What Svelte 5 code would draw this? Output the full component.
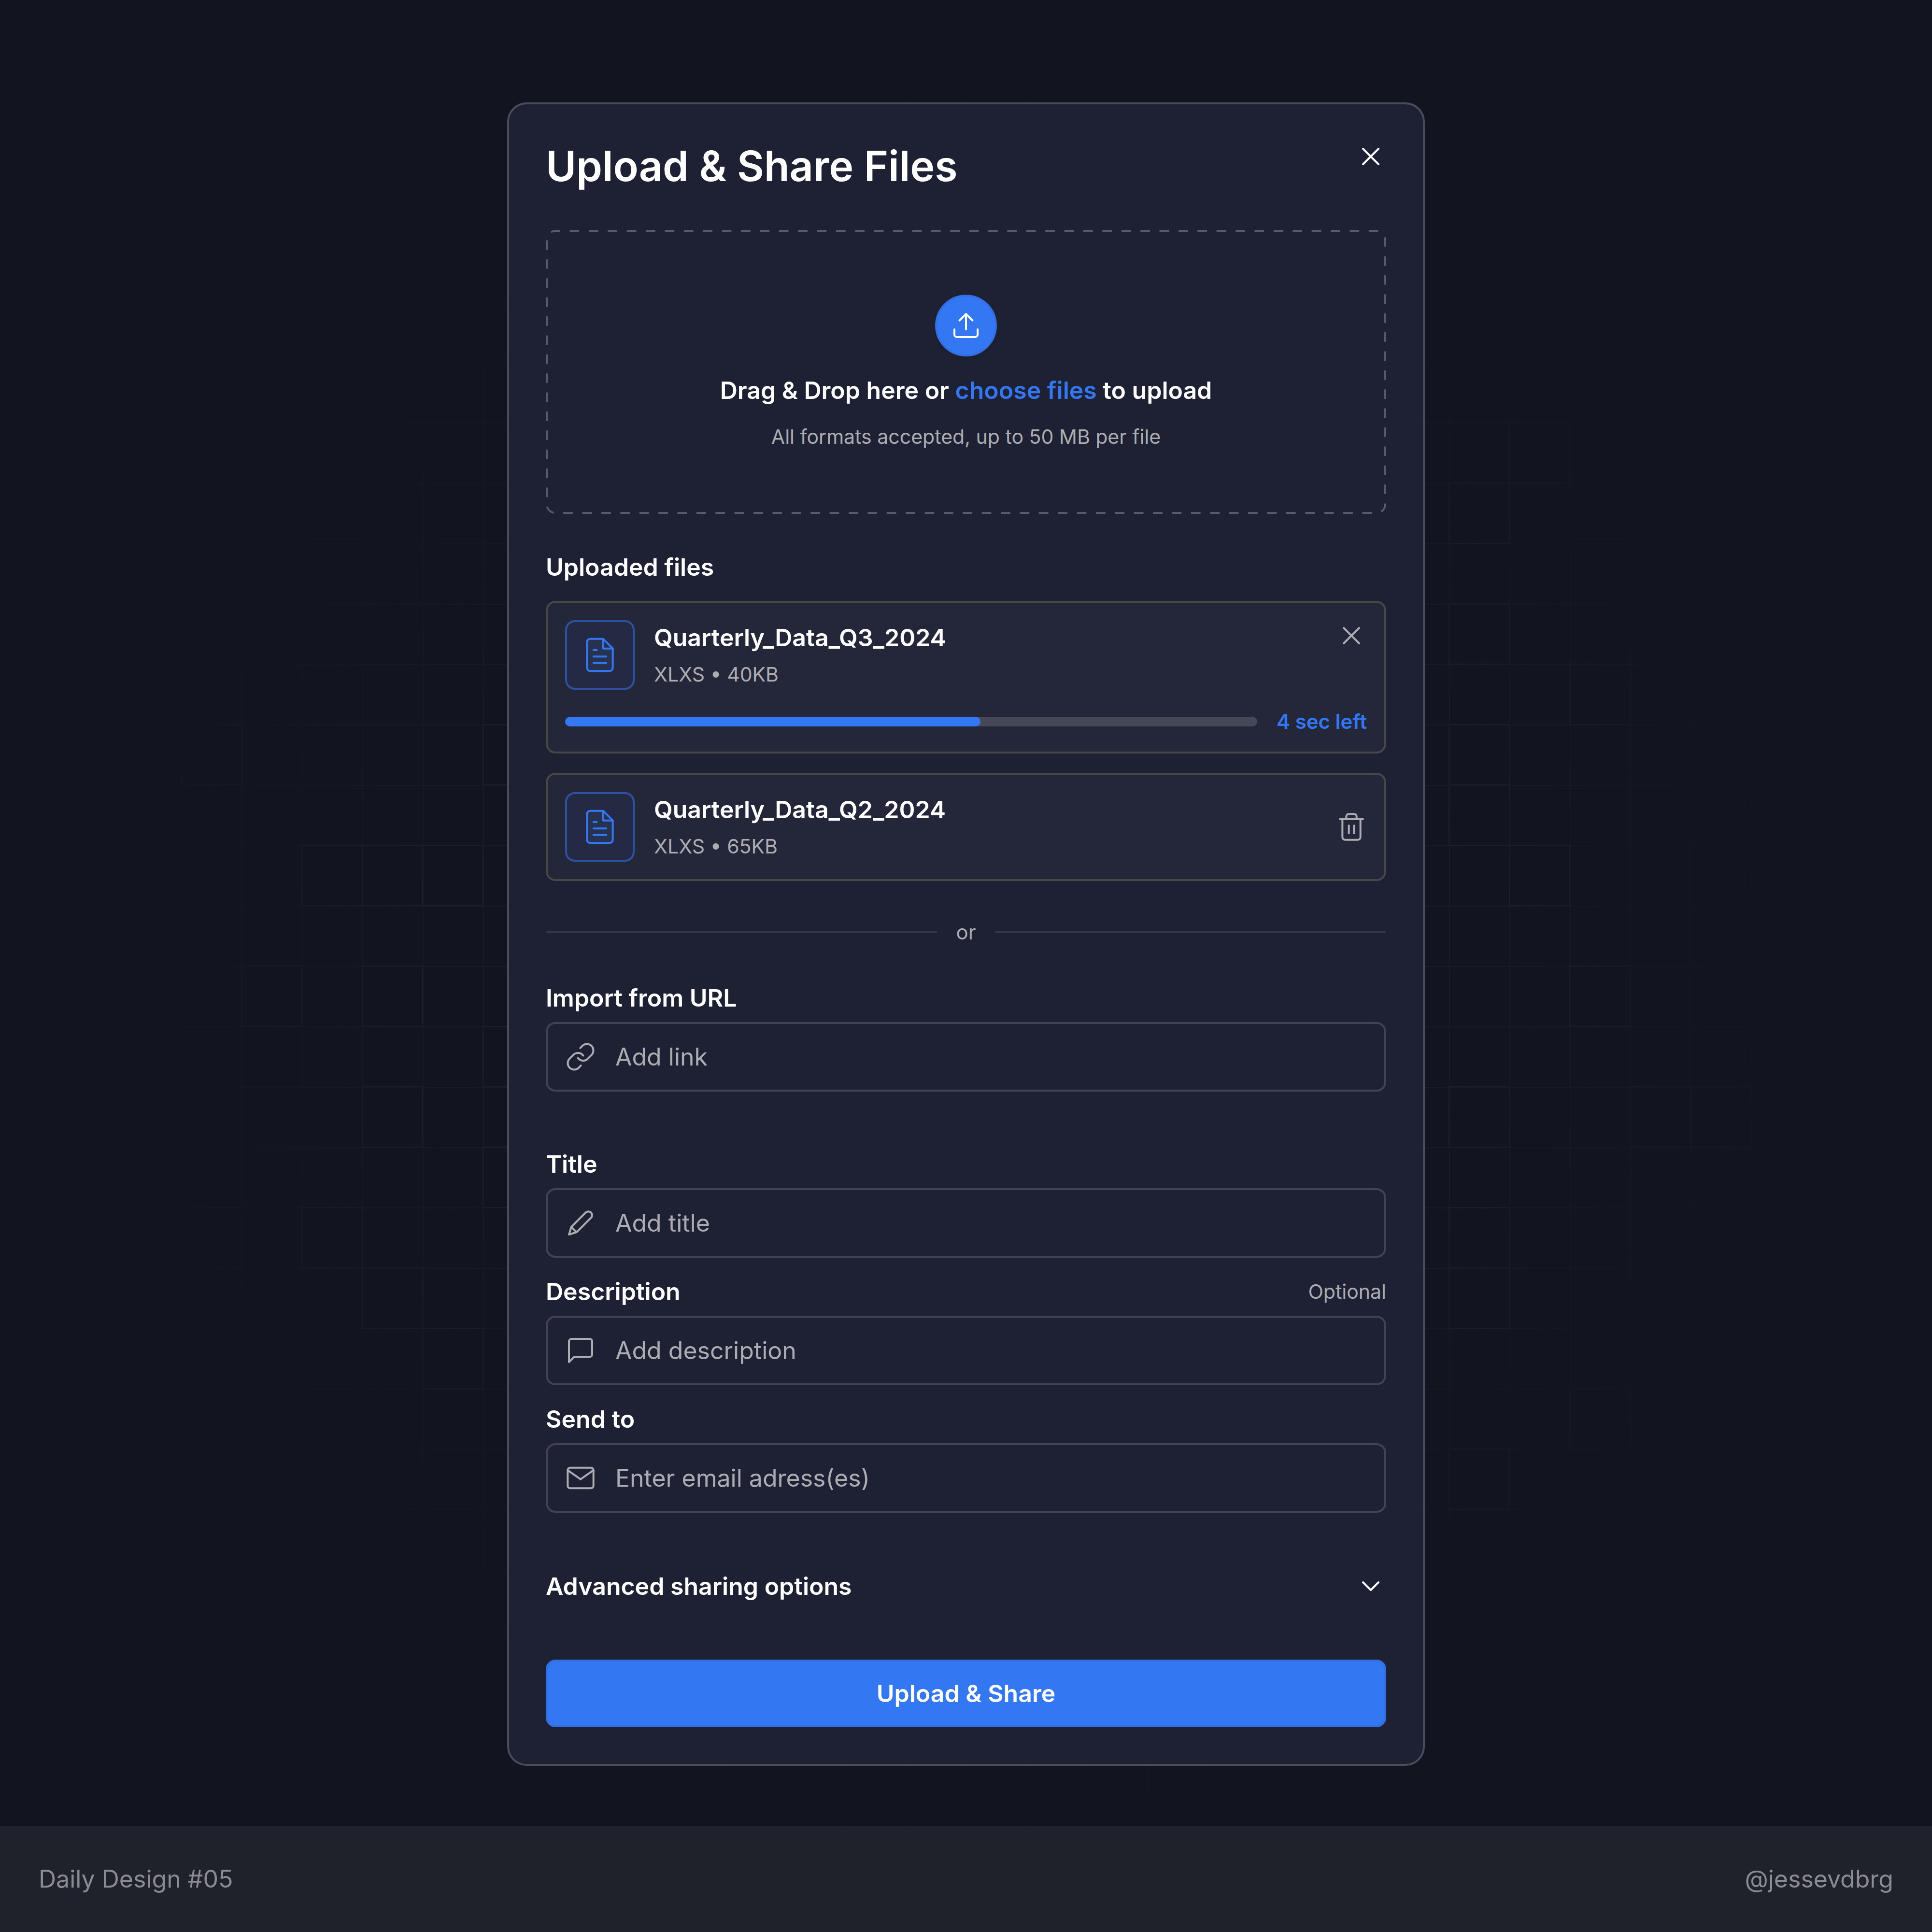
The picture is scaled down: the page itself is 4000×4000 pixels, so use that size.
<script lang="ts">
    interface UploadedFile {
        name: string;
        meta: string;
        progress?: number;
        remaining?: string;
    }

    const files: UploadedFile[] = [
        { name: "Quarterly_Data_Q3_2024", meta: "XLXS • 40KB", progress: 60, remaining: "4 sec left" },
        { name: "Quarterly_Data_Q2_2024", meta: "XLXS • 65KB" },
    ];

    // grid cells drawn a little brighter, as [column, row]
    const cells = [
        [3, 12], [8, 12], [5, 14], [6, 14], [7, 14], [4, 16], [6, 16], [8, 17], [6, 18],
        [8, 19], [3, 20], [5, 20], [6, 21], [7, 22],
        [25, 7], [24, 8], [24, 10], [26, 11], [24, 12], [24, 13], [25, 14], [26, 16],
        [24, 18], [27, 18], [28, 18], [24, 20], [24, 21], [26, 23], [24, 24],
    ];
    const cell = 125;
</script>

{#snippet icon(name: string)}
    <svg class="icon" viewBox="0 0 24 24" aria-hidden="true">
        {#if name === "close"}
            <path d="M18 6 6 18M6 6l12 12" />
        {:else if name === "upload"}
            <path d="M21 15v4a2 2 0 0 1-2 2H5a2 2 0 0 1-2-2v-4M17 8l-5-5-5 5M12 3v12" />
        {:else if name === "trash"}
            <path d="M3 6h18M19 6v14a2 2 0 0 1-2 2H7a2 2 0 0 1-2-2V6M8 6V4a2 2 0 0 1 2-2h4a2 2 0 0 1 2 2v2M10 11v6M14 11v6" />
        {:else if name === "link"}
            <path d="M10 13a5 5 0 0 0 7.54.54l3-3a5 5 0 0 0-7.07-7.07l-1.72 1.71" />
            <path d="M14 11a5 5 0 0 0-7.54-.54l-3 3a5 5 0 0 0 7.07 7.07l1.71-1.71" />
        {:else if name === "pencil"}
            <path d="M16.05 3.85a2.9 2.9 0 0 1 4.1 4.1L8.9 19.2 3 21l1.8-5.9zM4.8 15.1l4.1 4.1" />
        {:else if name === "message"}
            <path d="M21 15a2 2 0 0 1-2 2H7l-4 4V5a2 2 0 0 1 2-2h14a2 2 0 0 1 2 2z" />
        {:else if name === "mail"}
            <rect x="2" y="4" width="20" height="16" rx="2" />
            <path d="m2 6 10 7L22 6" />
        {:else if name === "chevron"}
            <path d="m6 9 6 6 6-6" />
        {/if}
    </svg>
{/snippet}

{#snippet field(id: string, label: string, placeholder: string, glyph: string, type = "text", hint = "")}
    <div class="field">
        <div class="field-head">
            <label for={id}>{label}</label>
            {#if hint}<span class="hint">{hint}</span>{/if}
        </div>
        <div class="control">
            {@render icon(glyph)}
            <input {id} {type} {placeholder} />
        </div>
    </div>
{/snippet}

<div class="page">
    <svg class="grid" aria-hidden="true">
        <defs>
            <pattern id="lines" width={cell} height={cell} patternUnits="userSpaceOnUse">
                <path d="M0 0H{cell}M0 0V{cell}" />
            </pattern>
        </defs>
        <rect class="lines" width="100%" height="100%" fill="url(#lines)" />
        {#each cells as [col, row]}
            <rect class="cell" x={col * cell} y={row * cell} width={cell} height={cell} />
        {/each}
    </svg>

    <main>
        <form class="card" onsubmit={(e) => e.preventDefault()}>
            <header>
                <h1>Upload &amp; Share Files</h1>
                <button class="icon-button" type="button" aria-label="Close">{@render icon("close")}</button>
            </header>

            <div class="dropzone">
                <svg class="outline" aria-hidden="true">
                    <rect x="2" y="2" rx="18" pathLength="234" />
                </svg>
                <div class="badge">{@render icon("upload")}</div>
                <p>Drag &amp; Drop here or <a href="#files">choose files</a> to upload</p>
                <p class="small">All formats accepted, up to 50 MB per file</p>
            </div>

            <section class="files" id="files">
                <h2>Uploaded files</h2>
                {#each files as file (file.name)}
                    <article>
                        <div class="file">
                            <div class="thumb">
                                <svg viewBox="0 0 24 24" aria-hidden="true">
                                    <path class="sheet" d="M14 2H6a2 2 0 0 0-2 2v16a2 2 0 0 0 2 2h12a2 2 0 0 0 2-2V8z" />
                                    <path d="M14 2v6h6M16 13H8M16 17H8M10 9H8" />
                                </svg>
                            </div>
                            <div class="info">
                                <h3>{file.name}</h3>
                                <p class="small">{file.meta}</p>
                            </div>
                            {#if file.progress}
                                <button class="icon-button muted top" type="button" aria-label="Cancel upload">
                                    {@render icon("close")}
                                </button>
                            {:else}
                                <button class="icon-button muted" type="button" aria-label="Delete file">
                                    {@render icon("trash")}
                                </button>
                            {/if}
                        </div>
                        {#if file.progress}
                            <div class="progress">
                                <div class="track" role="progressbar" aria-label={file.name} aria-valuenow={file.progress}>
                                    <div class="bar" style="width: {file.progress}%"></div>
                                </div>
                                <span class="remaining">{file.remaining}</span>
                            </div>
                        {/if}
                    </article>
                {/each}
            </section>

            <div class="divider">or</div>

            <div class="fields">
                {@render field("url", "Import from URL", "Add link", "link", "url")}
            </div>

            <div class="fields spaced">
                {@render field("title", "Title", "Add title", "pencil")}
                {@render field("description", "Description", "Add description", "message", "text", "Optional")}
                {@render field("email", "Send to", "Enter email adress(es)", "mail")}
            </div>

            <button class="advanced" type="button">
                Advanced sharing options
                {@render icon("chevron")}
            </button>

            <button class="submit" type="submit">Upload &amp; Share</button>
        </form>
    </main>

    <footer>
        <span>Daily Design #05</span>
        <span>@jessevdbrg</span>
    </footer>
</div>

<style>
    :global(body) {
        background: #12141f;
    }
    .page {
        --blue: #3377f2;
        --muted: #acadb2;
        --line: #424352;
        position: relative;
        display: flex;
        flex-direction: column;
        min-height: 100vh;
        color: #fff;
        font-family: Inter, "Liberation Sans", sans-serif;
        font-size: 50px;
        line-height: 60px;
    }
    .page * {
        box-sizing: border-box;
    }
    h1,
    h2,
    h3,
    p {
        margin: 0;
        font-weight: 600;
        font-size: inherit;
    }
    button,
    input {
        padding: 0;
        border: 0;
        background: none;
        color: inherit;
        font: inherit;
    }
    button {
        cursor: pointer;
    }
    svg {
        flex: none;
        fill: none;
        stroke: currentColor;
        stroke-linecap: round;
        stroke-linejoin: round;
    }
    .icon {
        display: block;
        width: 64px;
        height: 64px;
        stroke-width: 1.5;
    }

    .grid {
        position: absolute;
        inset: 0;
        width: 100%;
        height: 100%;
        mask-image: radial-gradient(circle 2000px at 50% 50%, #000 35%, transparent 95%);
    }
    .grid path {
        stroke: #1c1e29;
        stroke-width: 4;
    }
    .lines {
        stroke: none;
    }
    .cell {
        stroke: #222430;
        stroke-width: 2;
    }

    main {
        position: relative;
        flex: 1;
        display: flex;
        justify-content: center;
        align-items: flex-start;
        padding: 212px 40px 124px;
    }
    .card {
        display: flex;
        flex-direction: column;
        width: 100%;
        max-width: 1900px;
        padding: 76px;
        border: 4px solid #4b4c5b;
        border-radius: 40px;
        background: #1e2133;
    }
    header {
        display: flex;
        justify-content: space-between;
        align-items: flex-start;
        margin-bottom: 80px;
    }
    h1 {
        font-size: 86px;
        line-height: 104px;
    }
    .muted {
        color: var(--muted);
    }

    .dropzone {
        position: relative;
        display: flex;
        flex-direction: column;
        align-items: center;
        gap: 40px;
        padding: 134px 40px;
    }
    /* longer dashes than border-style: dashed gives */
    .outline {
        position: absolute;
        inset: 0;
        width: 100%;
        height: 100%;
        color: #585a68;
    }
    .outline rect {
        width: calc(100% - 4px);
        height: calc(100% - 4px);
        stroke-width: 4;
        stroke-linecap: butt;
        stroke-dasharray: 1 1;
        stroke-dashoffset: 0.5;
    }
    .badge {
        display: grid;
        place-items: center;
        width: 128px;
        height: 128px;
        border: 4px solid #316fe2;
        border-radius: 50%;
        background: var(--blue);
        box-shadow: 0 4px 8px rgb(0 0 0 / 0.1);
    }
    a {
        position: relative;
        color: var(--blue);
        text-decoration: none;
    }
    .small,
    .hint {
        color: var(--muted);
        font-size: 41px;
        font-weight: 400;
        line-height: 52px;
    }

    .files {
        display: flex;
        flex-direction: column;
        gap: 40px;
        margin-top: 80px;
    }
    article {
        display: flex;
        flex-direction: column;
        gap: 40px;
        padding: 36px;
        border: 4px solid #474746;
        border-radius: 20px;
        background: #242639;
    }
    .file {
        display: flex;
        align-items: center;
        gap: 40px;
    }
    .thumb {
        display: grid;
        place-items: center;
        width: 144px;
        height: 144px;
        border: 4px solid #2c52a1;
        border-radius: 20px;
        background: #252a44;
        color: var(--blue);
    }
    .thumb svg {
        width: 80px;
        height: 80px;
        stroke-width: 1.2;
    }
    .sheet {
        fill: #263250;
    }
    .info {
        flex: 1;
        display: flex;
        flex-direction: column;
        gap: 20px;
    }
    .top {
        align-self: flex-start;
    }
    .progress {
        display: flex;
        align-items: center;
        gap: 40px;
    }
    .track {
        flex: 1;
        height: 20px;
        border-radius: 10px;
        background: #464757;
    }
    .bar {
        height: 100%;
        border-radius: 10px;
        background: var(--blue);
    }
    .remaining {
        color: var(--blue);
        font-size: 42px;
        font-weight: 600;
        line-height: 52px;
    }

    .divider {
        display: flex;
        align-items: center;
        gap: 40px;
        margin: 80px 0;
        color: var(--muted);
        font-size: 42px;
        line-height: 52px;
    }
    .divider::before,
    .divider::after {
        content: "";
        flex: 1;
        height: 4px;
        background: #333548;
    }

    .fields {
        display: flex;
        flex-direction: column;
        gap: 40px;
    }
    .spaced {
        margin: 120px 0;
    }
    .field-head {
        display: flex;
        justify-content: space-between;
        align-items: center;
        margin-bottom: 20px;
    }
    label {
        font-weight: 600;
    }
    .control {
        display: flex;
        align-items: center;
        gap: 40px;
        height: 144px;
        padding: 0 36px;
        border: 4px solid var(--line);
        border-radius: 20px;
        color: var(--muted);
    }
    input {
        flex: 1;
        min-width: 0;
        outline: none;
    }
    input::placeholder {
        color: var(--muted);
        opacity: 1;
    }

    .advanced {
        display: flex;
        justify-content: space-between;
        align-items: center;
        margin-bottom: 120px;
        font-weight: 600;
    }
    .submit {
        height: 140px;
        border: 4px solid #316fe2;
        border-radius: 20px;
        background: var(--blue);
        font-weight: 600;
    }

    footer {
        position: relative;
        display: flex;
        justify-content: space-between;
        align-items: center;
        height: 220px;
        padding: 0 80px;
        background: #1f222a;
        color: #8b8c91;
    }
</style>
